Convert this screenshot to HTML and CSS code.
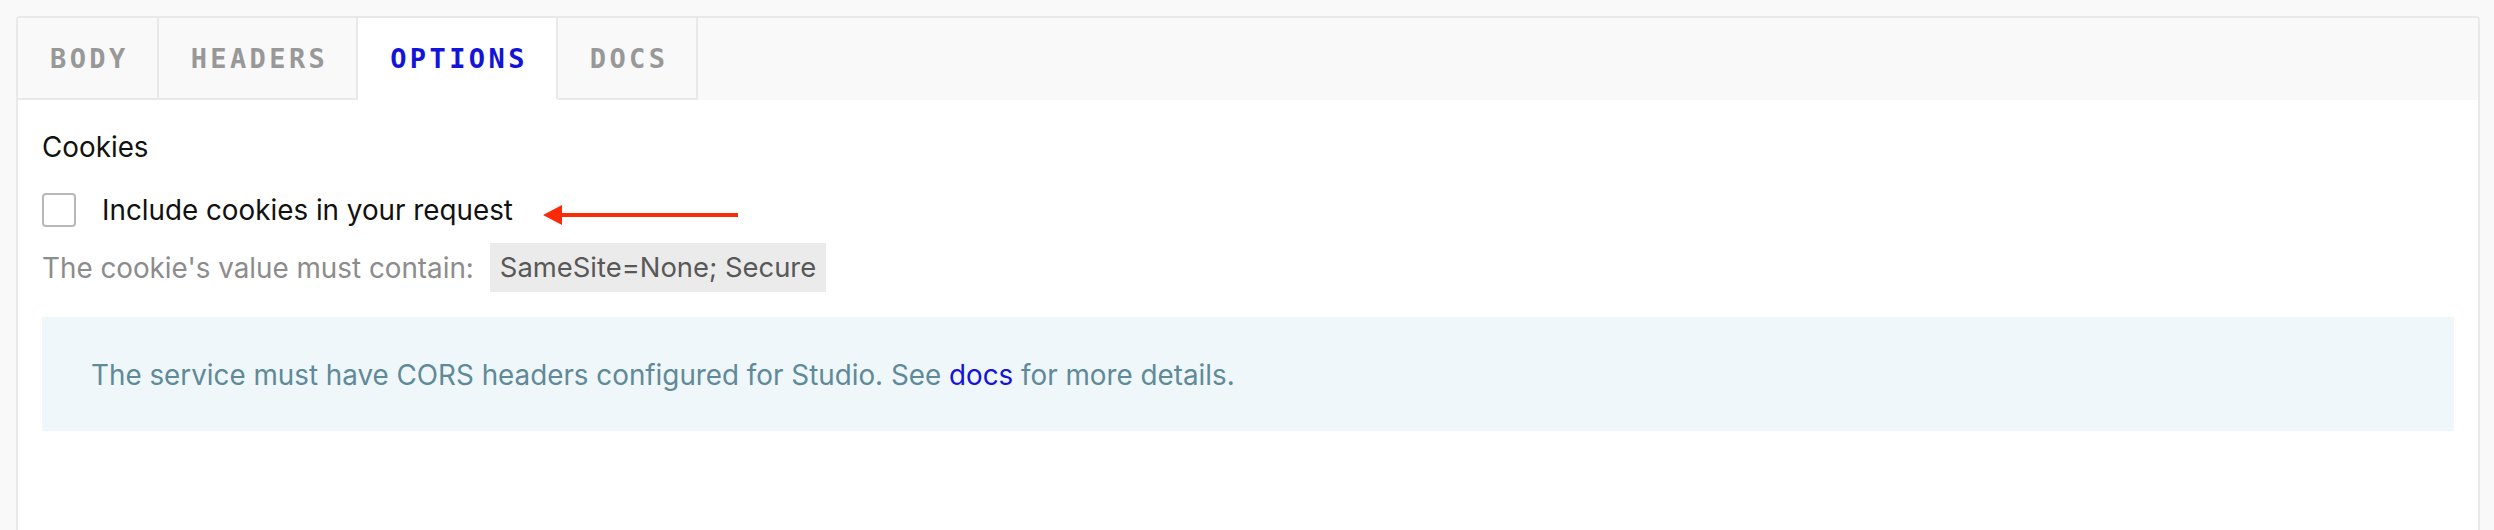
FILE: index.html
```html
<!DOCTYPE html>
<html lang="en">
<head>
<meta charset="utf-8">
<title>Options</title>
<link rel="stylesheet" href="styles.css">
</head>
<body>
<div class="panel">
  <div class="tabs">
    <div class="tab">BODY</div>
    <div class="tab">HEADERS</div>
    <div class="tab active">OPTIONS</div>
    <div class="tab">DOCS</div>
    <div class="tab-fill"></div>
  </div>
  <div class="content">
    <div class="section-title">Cookies</div>
    <label class="check-row">
      <span class="checkbox"></span>
      <span class="check-label">Include cookies in your request</span>
      <svg class="arrow" width="195" height="20" viewBox="0 0 195 20" aria-hidden="true"><path d="M0 10 L19 0 L19 8 L195 8 L195 12 L19 12 L19 20 Z" fill="#fd2a0a"/></svg>
    </label>
    <div class="hint">
      <span>The cookie's value must contain:</span>
      <span class="code">SameSite=None; Secure</span>
    </div>
    <div class="info">The service must have CORS headers configured for Studio. See <a href="#">docs</a> for more details.</div>
  </div>
</div>
</body>
</html>
```

FILE: styles.css
```css
html, body {
  margin: 0;
}

body {
  background: #f9f9f9;
  padding: 16px 14px 0 16px;
  height: 530px;
  box-sizing: border-box;
  overflow: hidden;
  font-family: Inter, "Noto Sans", sans-serif;
}

.panel {
  border: 2px solid #e9e9e9;
  border-bottom: none;
  border-radius: 4px 4px 0 0;
  background: #ffffff;
  height: 520px;
}

.tabs {
  display: flex;
  height: 82px;
  background: #f9f9f9;
  border-radius: 3px 3px 0 0;
}

.tab {
  display: flex;
  align-items: center;
  padding: 0 28px 0 32px;
  font-family: "DejaVu Sans Mono", monospace;
  font-weight: bold;
  font-size: 27px;
  letter-spacing: 3.4px;
  color: #989898;
  border-right: 2px solid #e9e9e9;
  border-bottom: 2px solid #e9e9e9;
}

.tab.active {
  background: #ffffff;
  color: #1414d9;
  border-bottom-color: #ffffff;
}

.tab-fill {
  flex: 1;
}

.content {
  padding: 27px 24px 0 24px;
}

.section-title {
  font-size: 27.8px;
  line-height: 40px;
  color: #111111;
}

.check-row {
  display: flex;
  align-items: center;
  margin-top: 26px;
  height: 34px;
}

.checkbox {
  width: 34px;
  height: 34px;
  box-sizing: border-box;
  border: 2px solid #b8b8b8;
  border-radius: 4px;
  background: #ffffff;
}

.check-label {
  margin-left: 26px;
  font-size: 27.8px;
  line-height: 34px;
  color: #111111;
}

.arrow {
  margin-left: 30px;
  margin-top: 10px;
}

.hint {
  display: flex;
  align-items: center;
  margin-top: 16px;
  font-size: 27.8px;
  color: #8c8c8c;
}

.code {
  margin-left: 16px;
  padding: 0 10px;
  line-height: 49px;
  font-size: 27.4px;
  background: #ebebeb;
  color: #585858;
}

.info {
  margin-top: 25px;
  padding: 38px 49px 36px;
  background: #eff7fa;
  color: #5f8a99;
  font-size: 27.8px;
  line-height: 40px;
}

.info a {
  color: #1414d9;
  text-decoration: none;
}
```
